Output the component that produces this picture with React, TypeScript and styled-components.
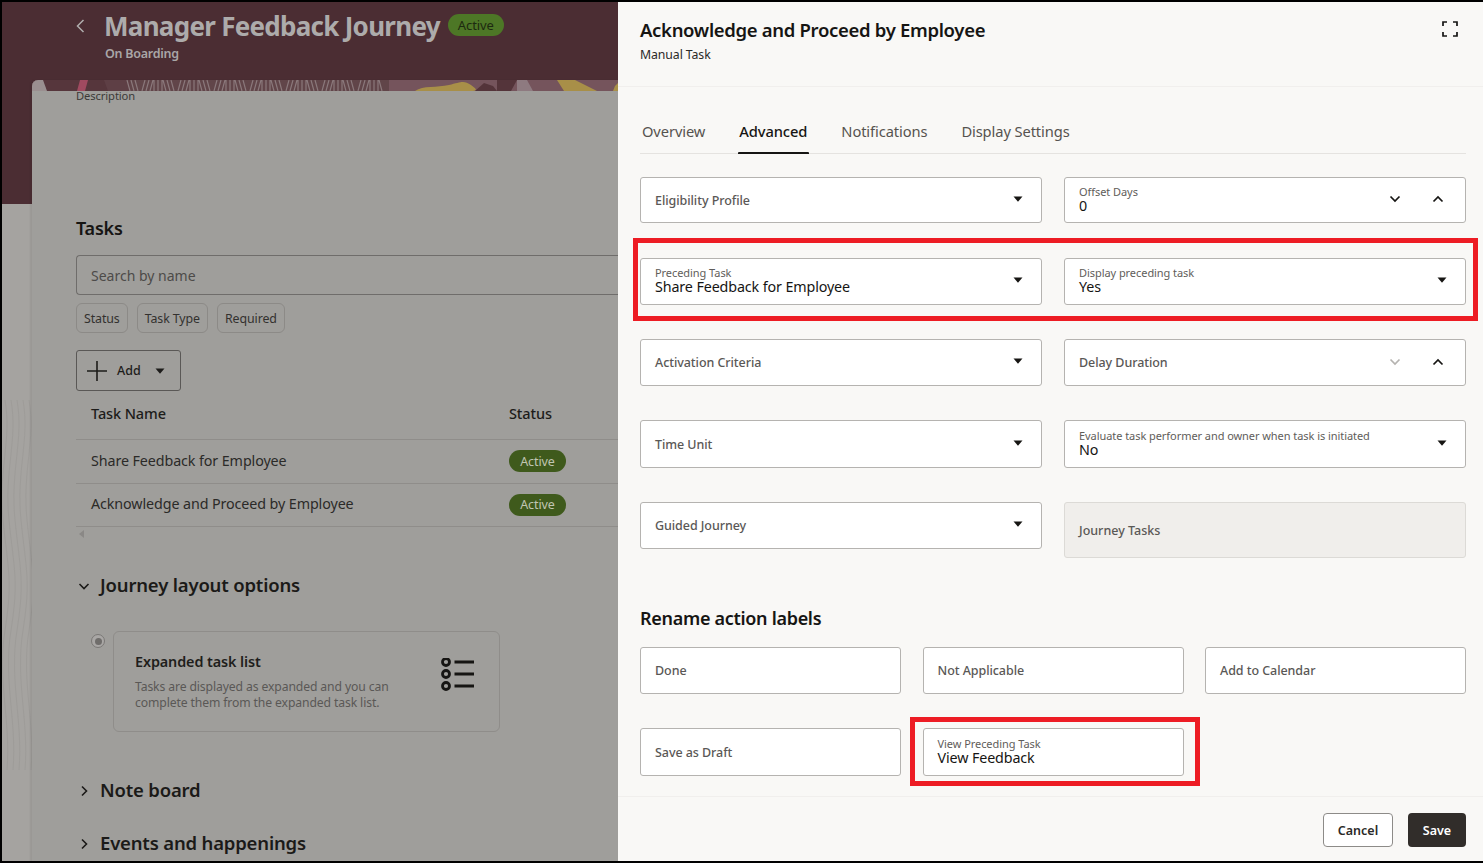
import React from "react";
import styled, { createGlobalStyle } from "styled-components";

const Global = createGlobalStyle`
  html, body { margin: 0; padding: 0; background: #000; }
  body { font-family: "Noto Sans", "Open Sans", sans-serif; }
  * { box-sizing: border-box; }
`;

const Frame = styled.div`
  width: 1483px; height: 863px; overflow: hidden; display: flex; background: #000;
  padding: 2px 0 2px 2px; position: relative;
`;
const LeftPane = styled.div`
  width: 616px; height: 859px; flex: none; overflow: hidden; position: relative;
  background: linear-gradient(#4b2d33 0, #4b2d33 202px, #a5a3a0 202px, #a5a3a0 100%);
`;
const Backdrop = styled.svg`
  position: absolute; left: 0; top: 398px; width: 30px; height: 370px;
`;
const Header = styled.header`
  height: 78px; padding: 9px 0 0 72px; display: flex; flex-direction: column; position: relative;
`;
const TitleRow = styled.div`
  display: flex; align-items: center; height: 30px;
`;
const Back = styled.svg`
  width: 12px; height: 18px; margin-right: 18px; flex: none;
`;
const PageTitle = styled.h1`
  margin: 0; font-size: 26px; line-height: 30px; font-weight: 700; color: #adabab; letter-spacing: -0.72px;
`;
const HeadBadge = styled.span`
  margin-left: 8px; margin-top: -3px; width: 56px; background: #4d7726; color: #1d2a10; border-radius: 11px;
  font-size: 13px; line-height: 22px; height: 22px; text-align: center; letter-spacing: -0.1px;
`;
const PageSub = styled.div`
  margin: 5px 0 0 31px; font-size: 12.5px; line-height: 16px; font-weight: 600; color: #a9a6a7; letter-spacing: -0.25px;
`;
const Card = styled.main`
  margin-left: 30px; width: 640px; height: 800px; background: #9f9e9b; border-radius: 6px 0 0 0;
  box-shadow: -2px 0 2px rgba(0,0,0,.07); position: relative; overflow: hidden; padding: 0 0 0 44px;
`;
const Strip = styled.svg`
  display: block; width: 586px; height: 11px; margin-left: -44px;
`;
const Description = styled.div`
  font-size: 11.2px; line-height: 14px; color: #3c3a38; letter-spacing: -0.1px; margin-top: -2px;
`;
const TasksTitle = styled.h2`
  margin: 113px 0 0; font-size: 18px; line-height: 24px; font-weight: 600; color: #161513; letter-spacing: -0.2px;
`;
const Search = styled.div`
  margin-top: 15px; height: 40px; width: 560px; border: 1px solid #6f6d6b; border-radius: 4px 0 0 4px; border-right: 0;
  font-size: 14px; color: #4d4b49; display: flex; align-items: center; padding-left: 14px;
`;
const Chips = styled.div`
  display: flex; gap: 9px; margin-top: 8px;
`;
const Chip = styled.span`
  height: 30px; border: 1px solid #8c8a87; border-radius: 6px; display: flex; align-items: center; padding: 0 7px;
  font-size: 12.4px; color: #33312f; letter-spacing: -0.1px;
`;
const AddButton = styled.div`
  margin-top: 17px; width: 105px; height: 41px; border: 1px solid #5a5856; border-radius: 3px;
  display: flex; align-items: center; padding-left: 10px; font-size: 12.5px; font-weight: 500; color: #1d1c1a;
`;
const Plus = styled.svg` width: 20px; height: 20px; margin-right: 10px; `;
const AddCaret = styled.svg` width: 10px; height: 6px; margin-left: 14px; `;
const TaskTable = styled.div`
  width: 560px; margin-top: 2px;
`;
const TaskHead = styled.div`
  height: 47px; display: grid; grid-template-columns: 418px 1fr; align-items: center; padding: 0 0 7px 15px;
  font-size: 14.5px; font-weight: 500; color: #1d1c1a; border-bottom: 1px solid #8f8d8a; letter-spacing: -0.1px;
`;
const TaskRow = styled.div`
  height: 43.5px; display: grid; grid-template-columns: 418px 1fr; align-items: center; padding: 0 0 0 15px;
  font-size: 14.3px; color: #2b2a28; border-bottom: 1px solid #8f8d8a; letter-spacing: -0.1px;
`;
const TaskName = styled.span` padding-bottom: 2px; `;
const RowBadge = styled.span`
  width: 57px; height: 22px; border-radius: 11px; background: #3f5a1c; color: #c0c5b2; font-size: 12.5px;
  display: flex; align-items: center; justify-content: center; letter-spacing: -0.1px;
`;
const ScrollArrow = styled.div`
  width: 0; height: 0; margin: 3px 0 0 3px; border-style: solid; border-width: 4px 5px 4px 0; border-color: transparent #8a8886 transparent transparent;
`;
const SectionHead = styled.h2<{ $top: number }>`
  margin: ${p => p.$top}px 0 0; display: flex; align-items: center; font-size: 18.5px; line-height: 26px; font-weight: 600;
  color: #1b1a18; letter-spacing: -0.18px; height: 26px;
`;
const Chev = styled.svg`
  width: 12px; height: 12px; margin: 2px 10px 0 2px; flex: none;
`;
const LayoutRow = styled.div`
  display: flex; margin: 33px 0 0 15px; align-items: flex-start;
`;
const Radio = styled.div`
  width: 14px; height: 14px; border: 1px solid #7a7876; border-radius: 50%; margin: 3px 8px 0 0; display: flex;
  align-items: center; justify-content: center; flex: none; background: #a9a7a5;
  &::after { content: ""; width: 7px; height: 7px; background: #6f6d6b; border-radius: 50%; }
`;
const LayoutCard = styled.div`
  width: 387px; height: 101px; border: 1px solid #8f8d8a; border-radius: 6px; padding: 21px 25px 0 21px; display: flex;
  justify-content: space-between;
`;
const LayoutTitle = styled.div`
  font-size: 14.4px; line-height: 18px; font-weight: 600; color: #1f1e1c; letter-spacing: -0.1px;
`;
const LayoutText = styled.div`
  margin-top: 8px; font-size: 12.2px; line-height: 15.5px; color: #5a5856; letter-spacing: -0.12px;
`;
const ListIcon = styled.svg` width: 35px; height: 34px; flex: none; margin: 5px 0 0 0; `;

const Drawer = styled.aside`
  flex: 1; height: 859px; background: #f9f8f6; position: relative; display: flex; flex-direction: column;
`;
const DrawerHead = styled.div`
  height: 85px; padding: 14px 18px 0 22px; border-bottom: 1px solid #f1efed; position: relative; flex: none;
`;
const DrawerTitle = styled.h1`
  margin: 0; font-size: 18.5px; line-height: 28px; font-weight: 600; color: #161513; letter-spacing: -0.32px;
`;
const DrawerSub = styled.div`
  margin-top: 3px; font-size: 12.3px; line-height: 16px; color: #2b2a28; letter-spacing: -0.1px;
`;
const Expand = styled.svg`
  position: absolute; right: 25px; top: 19px; width: 16px; height: 16px;
`;
const DrawerBody = styled.div`
  flex: 1; padding: 0 17px 0 22px; overflow: hidden;
`;
const Tabs = styled.nav`
  margin-top: 28px; height: 39px; display: flex; padding-left: 2px; gap: 34px; border-bottom: 1px solid #e5e3e0;
  font-size: 14.7px; letter-spacing: -0.1px;
`;
const Tab = styled.div<{ $on?: boolean }>`
  height: 39px; line-height: 32px; font-weight: ${p => (p.$on ? 500 : 400)}; color: ${p => (p.$on ? "#161513" : "#56534f")};
  position: relative;
  ${p => p.$on ? `&::after { content: ""; position: absolute; left: -1px; right: -2px; bottom: 0; height: 2px; background: #161513; border-radius: 1px 1px 0 0; }` : ""}
`;
const FormGrid = styled.div`
  margin-top: 23px; display: grid; grid-template-columns: 402px 402px; column-gap: 22px;
  grid-template-rows: 47px 47px 47px 48px 56px; row-gap: 34px;
`;
const Field = styled.div<{ $h?: number }>`
  height: ${p => (p.$h ? `${p.$h}px` : "100%")}; background: #fff; border: 1px solid #b5b3b0; border-radius: 3px;
  padding: 0 14px; display: flex; align-items: center; justify-content: space-between; min-width: 0;
`;
const FieldText = styled.div` display: flex; flex-direction: column; padding-bottom: 2px; `;
const Placeholder = styled.div`
  font-size: 12.5px; font-weight: 500; color: #5a5856; letter-spacing: -0.06px;
`;
const Label = styled.div`
  font-size: 11px; line-height: 13px; color: #5f5d5a; letter-spacing: -0.06px;
`;
const Value = styled.div`
  font-size: 14.3px; line-height: 16px; color: #161513; letter-spacing: -0.12px;
`;
const Caret = styled.svg` width: 10px; height: 6px; margin: 0 4px 3px 0; flex: none; `;
const Steppers = styled.div` display: flex; gap: 31px; margin-right: 7px; margin-bottom: 2px; `;
const Step = styled.svg` width: 12px; height: 8px; `;
const Disabled = styled.div`
  background: #f0eeeb; border: 1px solid #dcdad6; border-radius: 3px; display: flex; align-items: center; padding: 0 14px;
  font-size: 12.5px; font-weight: 500; color: #5a5856;
`;
const RenameTitle = styled.h2`
  margin: 48px 0 0; font-size: 18px; line-height: 24px; font-weight: 600; color: #161513; letter-spacing: -0.3px;
`;
const RenameGrid = styled.div`
  margin-top: 17px; display: grid; grid-template-columns: repeat(3, 1fr); column-gap: 21.5px;
  grid-template-rows: 47px 48px; row-gap: 34px;
`;
const Footer = styled.footer`
  height: 65px; border-top: 1px solid #f1efed; display: flex; justify-content: flex-end; align-items: flex-start;
  gap: 15px; padding: 16px 17px 0 0; flex: none;
`;
const CancelButton = styled.div`
  width: 70px; height: 34px; border: 1px solid #8d8b88; border-radius: 4px; background: #fff; display: flex; align-items: center;
  justify-content: center; font-size: 12.5px; font-weight: 600; color: #2b2a28;
`;
const SaveButton = styled.div`
  width: 58px; height: 34px; border-radius: 4px; background: #312d2a; color: #fff; display: flex; align-items: center;
  justify-content: center; font-size: 12.5px; font-weight: 600;
`;
const Highlight = styled.div<{ $x: number; $y: number; $w: number; $h: number }>`
  position: absolute; left: ${p => p.$x}px; top: ${p => p.$y}px; width: ${p => p.$w}px; height: ${p => p.$h}px;
  border: 5px solid #ed1c24; pointer-events: none;
`;

const CaretIcon = () => (
  <Caret viewBox="0 0 10 6"><path d="M0.5 0.5h9L5 5.7z" fill="#161513" /></Caret>
);
const StepIcon = ({ up, dim }: { up?: boolean; dim?: boolean }) => (
  <Step viewBox="0 0 12 8">
    <path d={up ? "M1.5 6.5 6 2l4.5 4.5" : "M1.5 1.5 6 6l4.5-4.5"} fill="none" stroke={dim ? "#b5b3b0" : "#161513"} strokeWidth="1.7" />
  </Step>
);

const textureLines = Array.from({ length: 64 }, (_, i) => {
  const x = 98 + i * 4;
  const lean = i % 9 < 3 ? -3 : i % 9 < 6 ? 3 : 0;
  return `M${x} 11L${x + lean} 0`;
}).join("");

const App = () => (
  <>
    <Global />
    <Frame>
      <LeftPane>
        <Backdrop viewBox="0 0 30 370">
          {[0, 1, 2, 3, 4].map(i => (
            <path key={i} d={`M${3 + i * 6} 0c7 40-7 70-2 120s10 60 2 110 6 90 2 140`} fill="none" stroke="#9e9c99" strokeWidth="1" />
          ))}
        </Backdrop>
        <Header>
          <TitleRow>
            <Back viewBox="0 0 12 18"><path d="M9.5 3 3.5 9l6 6" fill="none" stroke="#b0aeae" strokeWidth="1.5" /></Back>
            <PageTitle>Manager Feedback Journey</PageTitle>
            <HeadBadge>Active</HeadBadge>
          </TitleRow>
          <PageSub>On Boarding</PageSub>
        </Header>
        <Card>
          <Strip viewBox="0 0 586 11" preserveAspectRatio="none">
            <rect width="586" height="11" fill="#75545c" />
            <rect width="98" height="11" fill="#56363c" />
            <path d="M0 0h11l4 11H0z" fill="#9a8f90" />
            <path d="M48 0h8l-3 11h-8z" fill="#a04a60" />
            <path d="M72 0h26v11H76z" fill="#5e3f45" />
            <rect x="98" y="0" width="259" height="11" fill="#614549" />
            <path d={textureLines} stroke="#8a787b" strokeWidth="1.2" />
            <path d="M383 11c8-6 22-3 34-6s15-5 22 0 6 6 0 6z" fill="#a88f48" />
            <path d="M443 11l9-8 9 3 4 5z" fill="#54343a" />
            <path d="M465 0h20l-6 11h-14z" fill="#54343a" />
            <path d="M485 0h10l6 11H485z" fill="#8e7a80" />
            <path d="M525 0h18l22 11h-33z" fill="#a88f48" />
            <path d="M583 6l3-3v8h-5z" fill="#a88f48" />
          </Strip>
          <Description>Description</Description>
          <TasksTitle>Tasks</TasksTitle>
          <Search>Search by name</Search>
          <Chips>
            <Chip>Status</Chip>
            <Chip>Task Type</Chip>
            <Chip>Required</Chip>
          </Chips>
          <AddButton>
            <Plus viewBox="0 0 20 20"><path d="M10 0v20M0 10h20" stroke="#1d1c1a" strokeWidth="1.6" /></Plus>
            Add
            <AddCaret viewBox="0 0 10 6"><path d="M0.5 0.5h9L5 5.7z" fill="#1d1c1a" /></AddCaret>
          </AddButton>
          <TaskTable>
            <TaskHead><span>Task Name</span><span>Status</span></TaskHead>
            <TaskRow><TaskName>Share Feedback for Employee</TaskName><RowBadge>Active</RowBadge></TaskRow>
            <TaskRow><TaskName>Acknowledge and Proceed by Employee</TaskName><RowBadge>Active</RowBadge></TaskRow>
          </TaskTable>
          <ScrollArrow />
          <SectionHead $top={34}>
            <Chev viewBox="0 0 12 12"><path d="M1.5 4 6 8.5 10.5 4" fill="none" stroke="#1b1a18" strokeWidth="1.6" /></Chev>
            Journey layout options
          </SectionHead>
          <LayoutRow>
            <Radio />
            <LayoutCard>
              <div>
                <LayoutTitle>Expanded task list</LayoutTitle>
                <LayoutText>Tasks are displayed as expanded and you can<br />complete them from the expanded task list.</LayoutText>
              </div>
              <ListIcon viewBox="0 0 35 34">
                <g fill="none" stroke="#161513">
                  <circle cx="7" cy="4" r="3.5" strokeWidth="2.8" />
                  <circle cx="7" cy="16" r="3.5" strokeWidth="2.8" />
                  <circle cx="7" cy="28" r="3.5" strokeWidth="2.8" />
                  <path d="M15.5 4H35M15.5 16H35M15.5 28H35" strokeWidth="3" />
                </g>
              </ListIcon>
            </LayoutCard>
          </LayoutRow>
          <SectionHead $top={45}>
            <Chev viewBox="0 0 12 12"><path d="M4 1.5 8.5 6 4 10.5" fill="none" stroke="#1b1a18" strokeWidth="1.6" /></Chev>
            Note board
          </SectionHead>
          <SectionHead $top={27}>
            <Chev viewBox="0 0 12 12"><path d="M4 1.5 8.5 6 4 10.5" fill="none" stroke="#1b1a18" strokeWidth="1.6" /></Chev>
            Events and happenings
          </SectionHead>
        </Card>
      </LeftPane>
      <Drawer>
        <DrawerHead>
          <DrawerTitle>Acknowledge and Proceed by Employee</DrawerTitle>
          <DrawerSub>Manual Task</DrawerSub>
          <Expand viewBox="0 0 16 16"><path d="M1 5V1h4M11 1h4v4M15 11v4h-4M5 15H1v-4" fill="none" stroke="#161513" strokeWidth="1.7" /></Expand>
        </DrawerHead>
        <DrawerBody>
          <Tabs>
            <Tab>Overview</Tab>
            <Tab $on>Advanced</Tab>
            <Tab>Notifications</Tab>
            <Tab>Display Settings</Tab>
          </Tabs>
          <FormGrid>
            <Field $h={46}><Placeholder>Eligibility Profile</Placeholder><CaretIcon /></Field>
            <Field $h={46}>
              <FieldText><Label>Offset Days</Label><Value>0</Value></FieldText>
              <Steppers><StepIcon /><StepIcon up /></Steppers>
            </Field>
            <Field><FieldText><Label>Preceding Task</Label><Value>Share Feedback for Employee</Value></FieldText><CaretIcon /></Field>
            <Field><FieldText><Label>Display preceding task</Label><Value>Yes</Value></FieldText><CaretIcon /></Field>
            <Field><Placeholder>Activation Criteria</Placeholder><CaretIcon /></Field>
            <Field><Placeholder>Delay Duration</Placeholder><Steppers><StepIcon dim /><StepIcon up /></Steppers></Field>
            <Field><Placeholder>Time Unit</Placeholder><CaretIcon /></Field>
            <Field><FieldText><Label>Evaluate task performer and owner when task is initiated</Label><Value>No</Value></FieldText><CaretIcon /></Field>
            <Field $h={47}><Placeholder>Guided Journey</Placeholder><CaretIcon /></Field>
            <Disabled>Journey Tasks</Disabled>
          </FormGrid>
          <RenameTitle>Rename action labels</RenameTitle>
          <RenameGrid>
            <Field><Placeholder>Done</Placeholder></Field>
            <Field><Placeholder>Not Applicable</Placeholder></Field>
            <Field><Placeholder>Add to Calendar</Placeholder></Field>
            <Field><Placeholder>Save as Draft</Placeholder></Field>
            <Field><FieldText><Label>View Preceding Task</Label><Value>View Feedback</Value></FieldText></Field>
          </RenameGrid>
        </DrawerBody>
        <Footer>
          <CancelButton>Cancel</CancelButton>
          <SaveButton>Save</SaveButton>
        </Footer>
        <Highlight $x={15} $y={236} $w={845} $h={83} />
        <Highlight $x={292} $y={715} $w={290} $h={69} />
      </Drawer>
    </Frame>
  </>
);

export default App;
